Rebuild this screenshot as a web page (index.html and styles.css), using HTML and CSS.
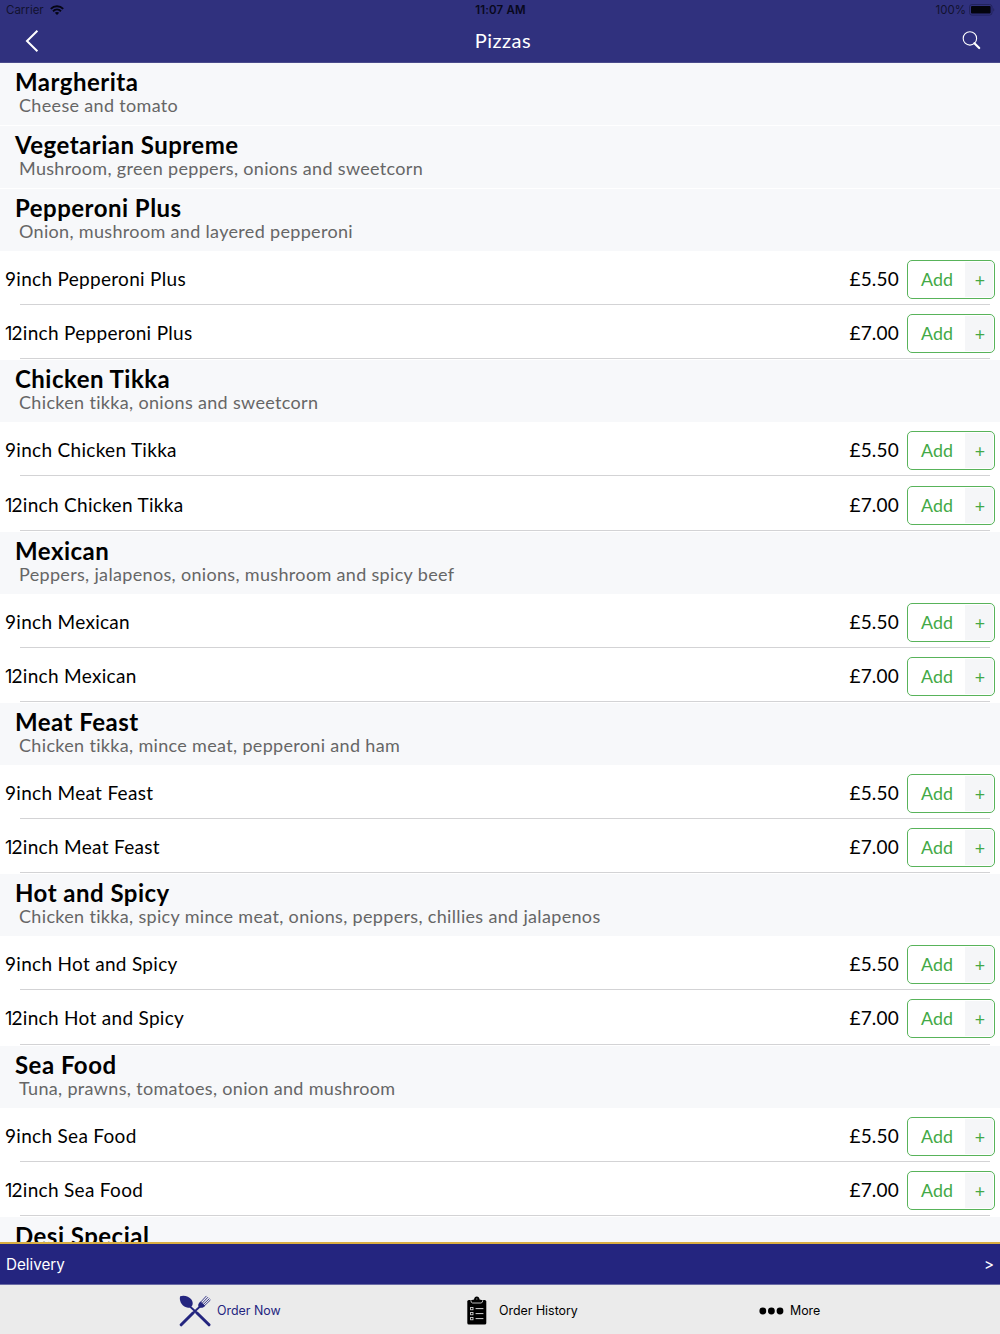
FILE: index.html
```html
<!DOCTYPE html>
<html lang="en">
<head>
    <meta charset="UTF-8">
    <meta name="viewport" content="width=device-width, initial-scale=1.0">
    <title>Pizzas</title>
    <link rel="stylesheet" href="styles.css">
</head>
<body>
    <header class="header">
        <div class="status">
            <div class="carrier">
                <span>Carrier</span>
                <svg width="14" height="10" viewBox="0 0 14 10">
                    <g fill="none" stroke="#050514" stroke-width="1.9">
                        <path d="M0.8 3.9C4.2 0.4 9.8 0.4 13.2 3.9"/>
                        <path d="M3 6.2C5.3 4 8.7 4 11 6.2"/>
                    </g>
                    <path d="M4.8 7.8C6 6.7 8 6.7 9.2 7.8L7 10z" fill="#050514"/>
                </svg>
            </div>
            <span class="time">11:07 AM</span>
            <div class="battery">
                <span>100%</span>
                <svg width="26" height="12" viewBox="0 0 26 12">
                    <rect x="0.5" y="0.5" width="22.5" height="10.6" rx="2.4" fill="none" stroke="#22235c"/>
                    <rect x="2" y="2" width="19.6" height="7.6" rx="1" fill="#03030c"/>
                    <path d="M24.3 4v3.6c1.3-.5 1.3-3.1 0-3.6z" fill="#22235c"/>
                </svg>
            </div>
        </div>
        <div class="navbar">
            <svg class="back" width="14" height="24" viewBox="0 0 14 24">
                <path d="M12.4 1.8L2 12l10.4 10.2" fill="none" stroke="#fff" stroke-width="2"/>
            </svg>
            <h1>Pizzas</h1>
            <svg class="search" width="19" height="19" viewBox="0 0 19 19">
                <circle cx="7.9" cy="7.4" r="6.7" fill="none" stroke="#fff" stroke-width="1.1"/>
                <path d="M12.4 12.2l4.8 4.8" stroke="#fff" stroke-width="2.2" stroke-linecap="round"/>
            </svg>
        </div>
    </header>

    <main class="menu">
        <section class="pizza">
            <div class="heading">
                <h2>Margherita</h2>
                <p>Cheese and tomato</p>
            </div>
        </section>
        <section class="pizza">
            <div class="heading">
                <h2>Vegetarian Supreme</h2>
                <p>Mushroom, green peppers, onions and sweetcorn</p>
            </div>
        </section>
        <section class="pizza">
            <div class="heading">
                <h2>Pepperoni Plus</h2>
                <p>Onion, mushroom and layered pepperoni</p>
            </div>
            <div class="item">
                <span class="name">9inch Pepperoni Plus</span>
                <span class="price">£5.50</span>
                <button class="add"><span>Add</span><span class="plus">+</span></button>
            </div>
            <div class="item">
                <span class="name large">12inch Pepperoni Plus</span>
                <span class="price">£7.00</span>
                <button class="add"><span>Add</span><span class="plus">+</span></button>
            </div>
        </section>
        <section class="pizza">
            <div class="heading">
                <h2>Chicken Tikka</h2>
                <p>Chicken tikka, onions and sweetcorn</p>
            </div>
            <div class="item">
                <span class="name">9inch Chicken Tikka</span>
                <span class="price">£5.50</span>
                <button class="add"><span>Add</span><span class="plus">+</span></button>
            </div>
            <div class="item">
                <span class="name large">12inch Chicken Tikka</span>
                <span class="price">£7.00</span>
                <button class="add"><span>Add</span><span class="plus">+</span></button>
            </div>
        </section>
        <section class="pizza">
            <div class="heading">
                <h2>Mexican</h2>
                <p>Peppers, jalapenos, onions, mushroom and spicy beef</p>
            </div>
            <div class="item">
                <span class="name">9inch Mexican</span>
                <span class="price">£5.50</span>
                <button class="add"><span>Add</span><span class="plus">+</span></button>
            </div>
            <div class="item">
                <span class="name large">12inch Mexican</span>
                <span class="price">£7.00</span>
                <button class="add"><span>Add</span><span class="plus">+</span></button>
            </div>
        </section>
        <section class="pizza">
            <div class="heading">
                <h2>Meat Feast</h2>
                <p>Chicken tikka, mince meat, pepperoni and ham</p>
            </div>
            <div class="item">
                <span class="name">9inch Meat Feast</span>
                <span class="price">£5.50</span>
                <button class="add"><span>Add</span><span class="plus">+</span></button>
            </div>
            <div class="item">
                <span class="name large">12inch Meat Feast</span>
                <span class="price">£7.00</span>
                <button class="add"><span>Add</span><span class="plus">+</span></button>
            </div>
        </section>
        <section class="pizza">
            <div class="heading">
                <h2>Hot and Spicy</h2>
                <p>Chicken tikka, spicy mince meat, onions, peppers, chillies and jalapenos</p>
            </div>
            <div class="item">
                <span class="name">9inch Hot and Spicy</span>
                <span class="price">£5.50</span>
                <button class="add"><span>Add</span><span class="plus">+</span></button>
            </div>
            <div class="item">
                <span class="name large">12inch Hot and Spicy</span>
                <span class="price">£7.00</span>
                <button class="add"><span>Add</span><span class="plus">+</span></button>
            </div>
        </section>
        <section class="pizza">
            <div class="heading">
                <h2>Sea Food</h2>
                <p>Tuna, prawns, tomatoes, onion and mushroom</p>
            </div>
            <div class="item">
                <span class="name">9inch Sea Food</span>
                <span class="price">£5.50</span>
                <button class="add"><span>Add</span><span class="plus">+</span></button>
            </div>
            <div class="item">
                <span class="name large">12inch Sea Food</span>
                <span class="price">£7.00</span>
                <button class="add"><span>Add</span><span class="plus">+</span></button>
            </div>
        </section>
        <section class="pizza">
            <div class="heading">
                <h2>Desi Special</h2>
            </div>
        </section>
    </main>

    <div class="delivery">
        <span>Delivery</span>
        <span class="arrow">&gt;</span>
    </div>

    <nav class="tabs">
        <a class="tab active">
            <svg width="32" height="32" viewBox="0 0 32 32">
                <g stroke="#24257f" stroke-linecap="round" fill="none">
                    <path d="M11 11.5L18 18" stroke-width="1.8"/>
                    <path d="M21 11.5L14 18" stroke-width="1.8"/>
                    <path d="M18 18L30 29.8M14 18L2.2 29.8" stroke-width="3"/>
                    <path d="M21.4 7.4L27.2 1.2M22.8 8.6L28.8 2.4M24.2 9.6L30.2 3.8M25.4 10.8L31.2 5.2" stroke-width="0.9"/>
                </g>
                <path d="M1.2 1.2C5-0.2 10 1.2 12.4 4.6C14.6 8 13.8 11 11.4 12.2C8.4 13.6 4.4 12 2.4 8.6C1 6.2 0.4 3.6 1.2 1.2z" fill="#24257f"/>
                <path d="M21.6 6.4L26.2 10.8C24.8 12.8 22 13.4 20.2 12.2C18.4 10.8 19.2 8.2 21.6 6.4z" fill="#24257f"/>
            </svg>
            <span>Order Now</span>
        </a>
        <a class="tab history">
            <svg width="20" height="29" viewBox="0 0 20 29">
                <rect x="0.3" y="4" width="19" height="24.6" rx="1.6"/>
                <path d="M4.4 6.8L4.4 5.4Q4.4 3.6 7 3.6Q7.4 0.4 9.8 0.4Q12.2 0.4 12.6 3.6Q15.2 3.6 15.2 5.4L15.2 6.8z"/>
                <g fill="none" stroke="#e9e9e9" stroke-width="0.8">
                    <path d="M3.8 4.2Q4 7 5.6 7H14Q15.6 7 15.8 4.2"/>
                    <rect x="3.6" y="11.4" width="2.4" height="2.4"/>
                    <rect x="3.6" y="16.4" width="2.4" height="2.4"/>
                    <rect x="3.6" y="21.4" width="2.4" height="2.4"/>
                    <path d="M8.6 12.6h7.8M8.6 17.6h7.8M8.6 22.6h7.8" stroke-width="0.9"/>
                </g>
                <circle cx="9.8" cy="3" r="0.7" fill="#777"/>
            </svg>
            <span>Order History</span>
        </a>
        <a class="tab">
            <svg width="25" height="8" viewBox="0 0 25 8">
                <circle cx="3.8" cy="4" r="3.4"/>
                <circle cx="12.4" cy="4" r="3.4"/>
                <circle cx="21" cy="4" r="3.4"/>
            </svg>
            <span>More</span>
        </a>
    </nav>
</body>
</html>
```
FILE: styles.css
```css
body {
    margin: 0;
    height: 1334px;
    display: flex;
    flex-direction: column;
    overflow: hidden;
    background: #ffffff;
    color: #000000;
    font-family: Lato, sans-serif;
    white-space: nowrap;
}
h1, h2, p {
    margin: 0;
}
svg {
    display: block;
    flex: none;
}
.header {
    height: 63px;
    flex: none;
    box-sizing: border-box;
    background: #30317e;
    border-bottom: 1px solid #4a4b8c;
}
.status {
    display: grid;
    grid-template-columns: 1fr auto 1fr;
    align-items: center;
    height: 20px;
    padding: 0 5px 0 6px;
    font-family: Inter, sans-serif;
    font-size: 11.5px;
    color: #12122f;
}
.carrier, .battery {
    display: flex;
    align-items: center;
    gap: 6px;
}
.battery {
    justify-content: flex-end;
    gap: 3px;
}
.time {
    font-weight: 600;
    letter-spacing: 0.15px;
    color: #08081c;
}
.navbar {
    display: grid;
    grid-template-columns: 1fr auto 1fr;
    align-items: center;
    height: 42px;
    padding: 0 19px 0 25px;
}
.navbar h1 {
    padding-bottom: 2px;
    font-size: 20px;
    line-height: 24px;
    font-weight: 400;
    letter-spacing: 0.5px;
    color: #ffffff;
}
.search {
    justify-self: end;
    padding-bottom: 1px;
}
.menu {
    flex: 1;
    min-height: 0;
    overflow: hidden;
}
.pizza {
    margin-bottom: 1px;
}
.heading {
    height: 62px;
    box-sizing: border-box;
    padding: 4px 15px 0;
    background: #f7f8fa;
}
.heading h2 {
    font-size: 24px;
    line-height: 30px;
    font-weight: 700;
    letter-spacing: 0.48px;
}
.heading p {
    padding-left: 4px;
    font-size: 18px;
    line-height: 17px;
    letter-spacing: 0.33px;
    color: #666666;
}
.item {
    display: flex;
    align-items: center;
    height: 54.17px;
    box-sizing: border-box;
    padding: 4px 5px 0;
    font-size: 19px;
    background: linear-gradient(#d3d3d5, #d3d3d5) 20px 100% / 970px 1px no-repeat;
}
.name {
    flex: 1;
    padding-bottom: 3px;
    letter-spacing: 0.3px;
}
.large::first-letter {
    font-family: Inter, sans-serif;
    font-size: 18px;
    letter-spacing: -0.8px;
}
.price {
    padding-bottom: 3px;
    margin-right: 8px;
    letter-spacing: 0.2px;
}
.add {
    display: flex;
    width: 88px;
    height: 39px;
    box-sizing: border-box;
    margin-bottom: 1px;
    padding: 1px;
    border: 1px solid #58b35a;
    border-radius: 5px;
    background: #ffffff;
    color: #43a946;
    font-family: inherit;
    font-size: 17.8px;
    line-height: 35px;
}
.add span {
    flex: 1;
}
.add .plus {
    flex: none;
    width: 28px;
    box-sizing: border-box;
    padding-left: 2px;
    background: #f5f6f8;
    line-height: 36px;
}
.delivery {
    display: flex;
    justify-content: space-between;
    align-items: center;
    flex: none;
    height: 43px;
    box-sizing: border-box;
    padding: 0 6px;
    border-top: 2px solid #d9ae42;
    border-bottom: 1px solid #6a6ba5;
    background: #24257f;
    color: #ffffff;
    font-family: Inter, sans-serif;
    font-size: 15.2px;
}
.tabs {
    display: grid;
    grid-template-columns: 288px 292px 1fr;
    flex: none;
    height: 49px;
    box-sizing: border-box;
    padding: 2px 0 0 179px;
    background: #ebebeb;
    font-family: Inter, sans-serif;
    font-size: 12.4px;
}
.tab {
    display: flex;
    align-items: center;
    gap: 6px;
}
.history {
    gap: 12px;
}
.active {
    color: #24257f;
}
```
